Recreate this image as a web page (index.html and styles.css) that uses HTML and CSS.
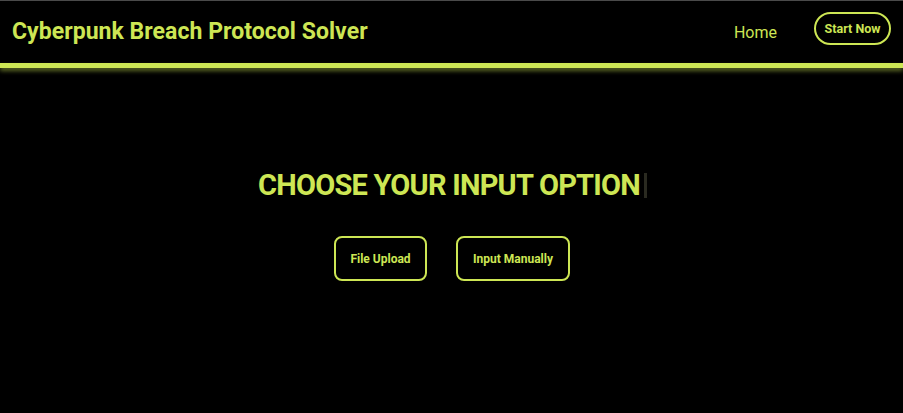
FILE: index.html
```html
<!DOCTYPE html>
<html>
<head>
<meta charset="utf-8">
<link rel="stylesheet" href="styles.css">
</head>
<body>
<header class="topbar">
  <div class="brand">Cyberpunk Breach Protocol Solver</div>
  <nav class="nav">
    <a class="nav-link" href="#">Home</a>
    <a class="nav-cta" href="#">Start Now</a>
  </nav>
</header>
<div class="glow-line"></div>
<main class="main">
  <h1 class="heading">CHOOSE YOUR INPUT OPTION<span class="caret"></span></h1>
  <div class="options">
    <button class="opt opt-file">File Upload</button>
    <button class="opt opt-manual">Input Manually</button>
  </div>
</main>
</body>
</html>
```

FILE: styles.css
```css
html, body {
  margin: 0;
  padding: 0;
  background: #000;
  height: 100%;
  overflow: hidden;
}
body {
  font-family: Roboto, "Liberation Sans", sans-serif;
  color: #cde654;
  border-top: 1px solid #4a4a4a;
  box-sizing: border-box;
}
.topbar {
  height: 62px;
  display: flex;
  align-items: center;
  justify-content: space-between;
  padding: 0 12px 0 12px;
  box-sizing: border-box;
}
.brand {
  font-size: 23px;
  font-weight: 700;
  letter-spacing: 0.05px;
  margin-top: -2px;
}
.nav {
  display: flex;
  align-items: center;
  gap: 37px;
}
.nav-link {
  color: #cde654;
  text-decoration: none;
  font-size: 16px;
  margin-top: 1px;
}
.nav-cta {
  color: #cde654;
  text-decoration: none;
  font-size: 12.5px;
  font-weight: 700;
  border: 2px solid #cde654;
  border-radius: 18px;
  width: 77px;
  height: 33px;
  box-sizing: border-box;
  display: flex;
  align-items: center;
  justify-content: center;
  margin-top: -8px;
}
.glow-line {
  height: 5px;
  background: #cde654;
  box-shadow: 0 3px 4px rgba(205, 230, 84, 0.45);
}
.main {
  display: flex;
  flex-direction: column;
  align-items: center;
  padding-top: 99px;
}
.heading {
  margin: 0;
  font-size: 29px;
  font-weight: 700;
  letter-spacing: -0.75px;
  line-height: 36px;
  display: flex;
  align-items: center;
  margin-left: 2px;
}
.caret {
  display: inline-block;
  width: 3px;
  height: 25px;
  background: #2a2a20;
  margin-left: 4px;
}
.options {
  display: flex;
  gap: 29px;
  margin-top: 33px;
  margin-left: 1px;
}
.opt {
  background: #000;
  color: #cde654;
  border: 2px solid #cde654;
  border-radius: 8px;
  height: 45px;
  font-family: Roboto, "Liberation Sans", sans-serif;
  font-size: 12px;
  font-weight: 700;
  padding: 0;
}
.opt-file { width: 93px; }
.opt-manual { width: 114px; }
```
